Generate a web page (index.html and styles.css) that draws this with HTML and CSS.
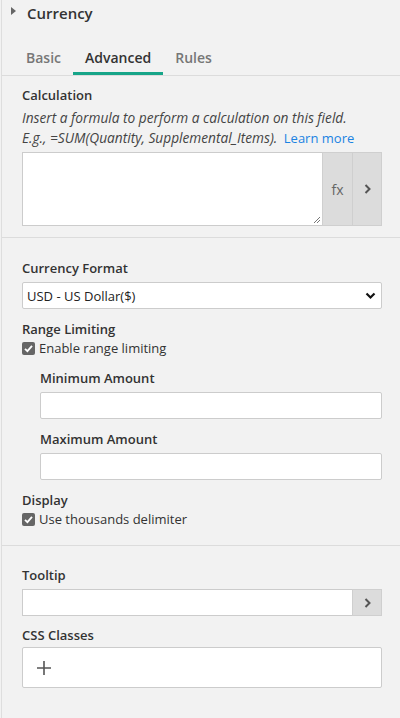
FILE: index.html
```html
<!DOCTYPE html>
<html>
<head>
<meta charset="utf-8">
<link rel="stylesheet" href="styles.css">
</head>
<body>
<div class="panel">
  <div class="header">
    <span class="caret"></span>
    <span class="title">Currency</span>
  </div>
  <div class="tabs">
    <div class="tab">Basic</div>
    <div class="tab active">Advanced</div>
    <div class="tab">Rules</div>
  </div>

  <div class="section s1">
    <div class="label">Calculation</div>
    <div class="help">Insert a formula to perform a calculation on this field.<br>E.g., =SUM(Quantity, Supplemental_Items). <a class="link">Learn more</a></div>
    <div class="calc">
      <div class="textarea"><svg class="grip" width="8" height="8" viewBox="0 0 8 8"><path d="M1 7 L7 1 M4 7 L7 4" stroke="#777" stroke-width="1"/></svg></div>
      <div class="btn fx">fx</div>
      <div class="btn chev"><svg width="9" height="12" viewBox="0 0 9 12"><path d="M2.5 2 L6.5 6 L2.5 10" fill="none" stroke="#555" stroke-width="2"/></svg></div>
    </div>
  </div>

  <div class="section s2">
    <div class="label">Currency Format</div>
    <div class="select">
      <span>USD - US Dollar($)</span>
      <svg width="11" height="8" viewBox="0 0 11 8"><path d="M1.5 1.5 L5.5 5.5 L9.5 1.5" fill="none" stroke="#111" stroke-width="2.2"/></svg>
    </div>
    <div class="label mt">Range Limiting</div>
    <div class="check"><span class="box"><svg width="13" height="13" viewBox="0 0 13 13"><path d="M3 6.8 L5.4 9.2 L10 3.8" fill="none" stroke="#fff" stroke-width="1.8"/></svg></span>Enable range limiting</div>
    <div class="indent">
      <div class="label sub">Minimum Amount</div>
      <div class="input"></div>
      <div class="label sub mt">Maximum Amount</div>
      <div class="input"></div>
    </div>
    <div class="label mt">Display</div>
    <div class="check"><span class="box"><svg width="13" height="13" viewBox="0 0 13 13"><path d="M3 6.8 L5.4 9.2 L10 3.8" fill="none" stroke="#fff" stroke-width="1.8"/></svg></span>Use thousands delimiter</div>
  </div>

  <div class="section s3">
    <div class="label">Tooltip</div>
    <div class="tooltip">
      <div class="tinput"></div>
      <div class="btn tchev"><svg width="9" height="12" viewBox="0 0 9 12"><path d="M2.5 2 L6.5 6 L2.5 10" fill="none" stroke="#555" stroke-width="2"/></svg></div>
    </div>
    <div class="label mt2">CSS Classes</div>
    <div class="classes"><svg width="16" height="16" viewBox="0 0 16 16"><path d="M8 1 V15 M1 8 H15" stroke="#555" stroke-width="1.6"/></svg></div>
  </div>
</div>
</body>
</html>
```

FILE: styles.css
```css
html, body {
  margin: 0;
  padding: 0;
  background: #f2f2f2;
}
body {
  font-family: "Open Sans", "Noto Sans", sans-serif;
  font-size: 13px;
  color: #333;
}
.panel {
  margin-left: 1px;
  border-left: 1px solid #dedede;
  min-height: 718px;
  box-sizing: border-box;
}
.header {
  display: flex;
  align-items: center;
  height: 26px;
  padding-left: 9px;
}
.caret {
  width: 0;
  height: 0;
  border-top: 4px solid transparent;
  border-bottom: 4px solid transparent;
  border-left: 5px solid #666;
  margin-right: 11px;
  margin-top: -5px;
}
.title {
  font-size: 15px;
  font-weight: 600;
  color: #333;
  margin-top: -1px;
}
.tabs {
  display: flex;
  margin-top: 12px;
  padding-left: 12px;
  border-bottom: 1px solid #dcdcdc;
}
.tab {
  padding: 10px 12px 5px;
  line-height: 19px;
  font-size: 14px;
  font-weight: 600;
  color: #777;
  border-bottom: 3px solid transparent;
}
.tab.active {
  color: #333;
  border-bottom-color: #17a589;
}
.section {
  padding: 0 18px 0 20px;
  border-bottom: 1px solid #dcdcdc;
}
.s1 {
  padding-top: 10px;
  padding-bottom: 11px;
}
.s2 {
  padding-top: 21px;
  padding-bottom: 16px;
}
.s3 {
  padding-top: 20px;
  border-bottom: none;
}
.label {
  font-weight: 600;
  line-height: 18px;
  color: #333;
}
.label.mt {
  margin-top: 11px;
}
.label.mt2 {
  margin-top: 10px;
}
.help {
  margin-top: 4px;
  font-style: italic;
  font-size: 13.7px;
  line-height: 20px;
  color: #444;
}
.link {
  font-style: normal;
  font-size: 13px;
  color: #1a82e2;
  margin-left: 3px;
}
.calc {
  display: flex;
  margin-top: 4px;
  height: 74px;
}
.textarea {
  flex: 1;
  background: #fff;
  border: 1px solid #ccc;
  border-right: none;
  position: relative;
}
.grip {
  position: absolute;
  right: 1px;
  bottom: 1px;
}
.btn {
  background: #dcdcdc;
  border: 1px solid #cfcfcf;
  display: flex;
  align-items: center;
  justify-content: center;
  box-sizing: border-box;
}
.fx {
  width: 30px;
  font-size: 14px;
  color: #666;
  border-right: none;
}
.chev {
  width: 30px;
}
.select {
  margin-top: 5px;
  height: 27px;
  box-sizing: border-box;
  background: #fff;
  border: 1px solid #ccc;
  border-radius: 2px;
  display: flex;
  align-items: center;
  justify-content: space-between;
  padding: 0 5px 0 4px;
  color: #222;
}
.check {
  display: flex;
  align-items: center;
  height: 20px;
  color: #333;
}
.box {
  width: 13px;
  height: 13px;
  background: #666;
  border-radius: 2px;
  margin-right: 4px;
  display: flex;
}
.indent {
  padding-left: 18px;
  margin-top: 11px;
}
.label.sub {
  line-height: 18px;
}
.input {
  margin-top: 5px;
  height: 27px;
  box-sizing: border-box;
  background: #fff;
  border: 1px solid #ccc;
  border-radius: 2px;
}
.tooltip {
  display: flex;
  margin-top: 5px;
  height: 27px;
}
.tinput {
  flex: 1;
  background: #fff;
  border: 1px solid #ccc;
  border-right: none;
}
.tchev {
  width: 30px;
}
.classes {
  margin-top: 3px;
  height: 41px;
  box-sizing: border-box;
  background: #fff;
  border: 1px solid #ccc;
  border-radius: 2px;
  display: flex;
  align-items: center;
  padding-left: 13px;
}
```
